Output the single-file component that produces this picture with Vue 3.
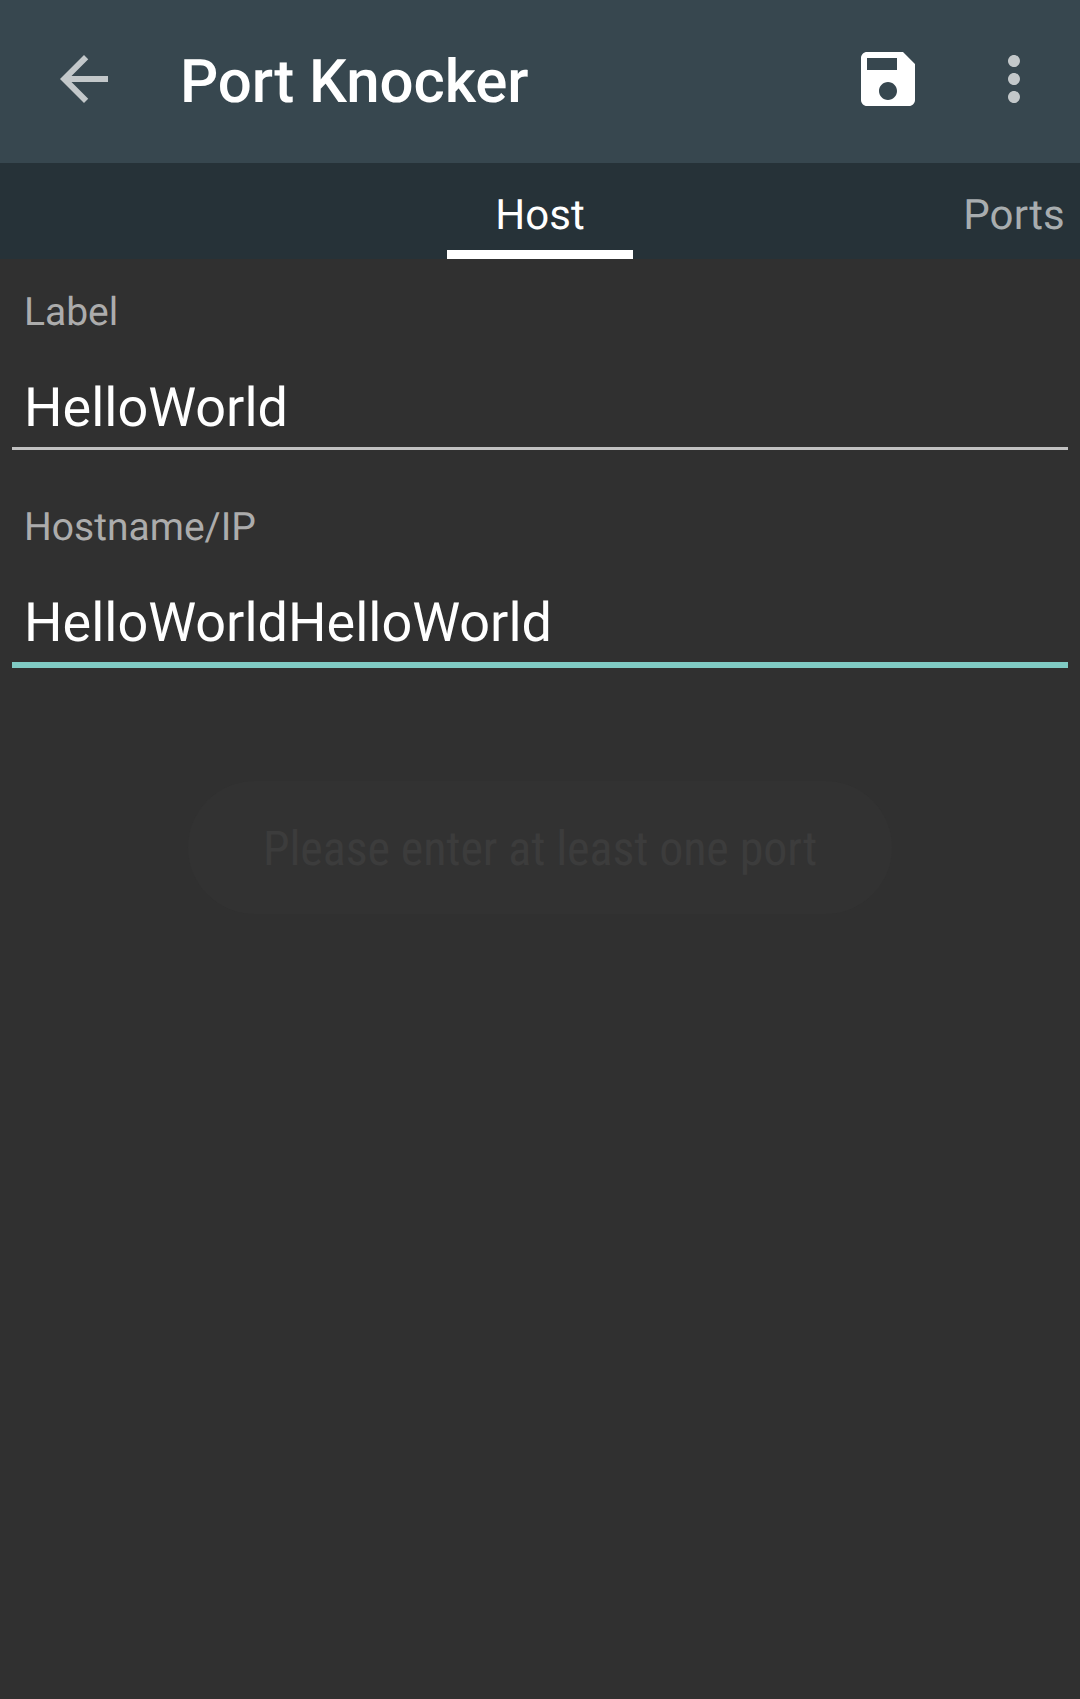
<script setup>
import { ref } from 'vue'

const fields = ref([
  { id: 'label', caption: 'Label', value: 'HelloWorld', focused: false },
  { id: 'host', caption: 'Hostname/IP', value: 'HelloWorldHelloWorld', focused: true },
])
</script>

<template>
  <div class="screen">
    <header class="toolbar">
      <svg class="icon dim" viewBox="0 0 24 24">
        <path d="M20 11H7.83l5.59-5.59L12 4l-8 8 8 8 1.41-1.41L7.83 13H20v-2z" />
      </svg>
      <h1 class="title">Port Knocker</h1>
      <svg class="icon save" viewBox="0 0 24 24">
        <path d="M17 3H5c-1.11 0-2 .9-2 2v14c0 1.1.89 2 2 2h14c1.1 0 2-.9 2-2V7l-4-4zm-5 16c-1.66 0-3-1.34-3-3s1.34-3 3-3 3 1.34 3 3-1.34 3-3 3zm3-10H5V5h10v4z" />
      </svg>
      <svg class="icon dim" viewBox="0 0 24 24">
        <path d="M12 8c1.1 0 2-.9 2-2s-.9-2-2-2-2 .9-2 2 .9 2 2 2zm0 2c-1.1 0-2 .9-2 2s.9 2 2 2 2-.9 2-2-.9-2-2-2zm0 6c-1.1 0-2 .9-2 2s.9 2 2 2 2-.9 2-2-.9-2-2-2z" />
      </svg>
    </header>

    <nav class="tabs">
      <span></span>
      <span class="tab active">Host</span>
      <span class="tab next">Ports</span>
    </nav>

    <main class="form">
      <div v-for="f in fields" :key="f.id" class="field">
        <div class="caption">{{ f.caption }}</div>
        <div class="input" :class="{ focused: f.focused }">{{ f.value }}</div>
      </div>
    </main>

    <div class="toast"><span class="message">Please enter at least one port</span></div>
  </div>
</template>

<style>
body {
  background: #303030;
}
</style>

<style scoped>
.screen {
  position: relative;
  width: 1080px;
  height: 1699px;
  overflow: hidden;
  background: #303030;
  color: #fff;
  font-family: Roboto, sans-serif;
  text-rendering: geometricPrecision;
}
.toolbar {
  display: flex;
  align-items: center;
  box-sizing: border-box;
  height: 163px;
  padding: 0 30px 5px 48px;
  background: #37474f;
}
.icon {
  flex: none;
  width: 72px;
  height: 72px;
  fill: #fff;
}
.dim {
  fill: #c3c8ca;
}
.title {
  flex: 1;
  margin: 5px 0 0 60px;
  font-size: 60px;
  line-height: 70px;
  font-weight: 500;
  letter-spacing: -0.12px;
}
.save {
  margin-right: 54px;
}
.tabs {
  display: grid;
  grid-template-columns: 1fr 186px 1fr;
  height: 96px;
  background: #263238;
}
.tab {
  box-sizing: border-box;
  height: 96px;
  padding-top: 28px;
  font-size: 42px;
  line-height: 50px;
  text-align: center;
}
.active {
  border-bottom: 9px solid #fff;
}
.next {
  padding-right: 15px;
  text-align: right;
  letter-spacing: 0.2px;
  color: #a8adaf;
}
.form {
  padding: 28px 12px 0;
}
.field {
  height: 215px;
}
.caption {
  padding-left: 12px;
  font-size: 39px;
  line-height: 50px;
  color: #acacac;
}
.input {
  height: 76px;
  padding: 34px 12px 0;
  border-bottom: 3px solid #c1c1c1;
  font-size: 54px;
  line-height: 76px;
}
.input.focused {
  border-bottom: 6px solid #80cbc4;
}
.toast {
  position: absolute;
  left: 188px;
  top: 781px;
  display: flex;
  align-items: center;
  justify-content: center;
  width: 704px;
  height: 133px;
  border-radius: 67px;
  background: #323232;
}
.message {
  padding-top: 2px;
  font-family: "Roboto Condensed", Roboto, sans-serif;
  font-stretch: 75%;
  font-size: 48px;
  line-height: 58px;
  letter-spacing: -0.1px;
  white-space: nowrap;
  color: #3c3c3c;
}
</style>
